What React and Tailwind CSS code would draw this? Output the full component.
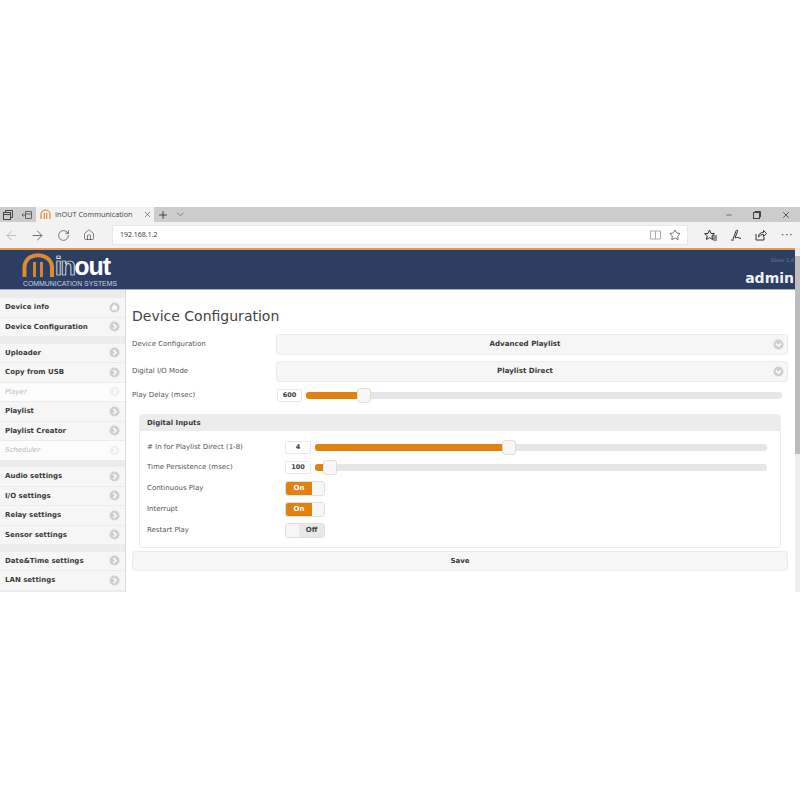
import { ArrowLeft, ArrowRight, RotateCw, Home, Star, X, Plus, ChevronDown, Minus } from "lucide-react";

const menuGroups = [
  [
    { label: "Device info", icon: "home" },
    { label: "Device Configuration" },
  ],
  [
    { label: "Uploader" },
    { label: "Copy from USB" },
    { label: "Player", disabled: true },
    { label: "Playlist" },
    { label: "Playlist Creator" },
    { label: "Scheduler", disabled: true },
  ],
  [
    { label: "Audio settings" },
    { label: "I/O settings" },
    { label: "Relay settings" },
    { label: "Sensor settings" },
  ],
  [
    { label: "Date&Time settings" },
    { label: "LAN settings" },
  ],
];

function RoundIcon({ type = "right", light = false }) {
  return (
    <svg width="11" height="11" viewBox="0 0 12 12" className="shrink-0">
      <circle cx="6" cy="6" r="5.5" fill={light ? "#f0f0f0" : "#cfcfcf"} />
      {type === "right" && <path d="M4.8 3.2 7.6 6 4.8 8.8" fill="none" stroke="#fff" strokeWidth="1.6" />}
      {type === "down" && <path d="M3.2 4.8 6 7.6 8.8 4.8" fill="none" stroke="#fff" strokeWidth="1.6" />}
      {type === "home" && <path d="M6 2.6 2.6 6h1v3h1.9V7h1v2h1.9V6h1z" fill="#fff" />}
    </svg>
  );
}

function MenuItem({ item }) {
  return (
    <div
      className={`flex h-[19.5px] items-center justify-between border-b border-[#ebebeb] pl-[5px] pr-[5px] text-[7px] font-bold ${
        item.disabled ? "bg-[#fcfcfc] italic font-normal text-[#bbb]" : "bg-[#f6f6f6] text-[#3a3a3a]"
      }`}
    >
      <span>{item.label}</span>
      <RoundIcon type={item.icon || "right"} light={item.disabled} />
    </div>
  );
}

function SelectBox({ label, value }) {
  return (
    <div className="flex items-center">
      <div className="w-[144px] pb-[1px] text-[7px] text-[#555]">{label}</div>
      <div className="flex h-[21px] flex-1 items-center rounded-[3px] border border-[#ececec] bg-[#f6f6f6] pr-[3px] text-[7.100px] font-bold text-[#3a3a3a]">
        <span className="flex-1 text-center">{value}</span>
        <RoundIcon type="down" />
      </div>
    </div>
  );
}

function Slider({ value, percent, label, labelWidth, small }) {
  return (
    <div className="flex items-center">
      <div className="text-[7px] text-[#555]" style={{ width: labelWidth }}>{label}</div>
      <div className={`flex h-[13px] items-center justify-center rounded-[2px] border border-[#e8e8e8] bg-white text-[6.500px] font-bold text-[#3a3a3a] ${small ? "w-[26px]" : "w-[25px]"}`}>
        {value}
      </div>
      <div className="relative ml-[4px] h-[7px] flex-1 rounded-[3px] bg-[#e6e6e6]">
        <div className="h-full rounded-[3px] bg-[#e08110]" style={{ width: `${percent}%` }} />
        <div
          className="absolute top-[-4px] h-[15px] w-[14px] -translate-x-1/2 rounded-[3px] border border-[#f0dcc4] bg-[#f7f7f7]"
          style={{ left: `${percent}%` }}
        />
      </div>
    </div>
  );
}

function Toggle({ on }) {
  return (
    <div className="flex h-[15px] w-[40px] overflow-hidden rounded-[3px] border border-[#e0e0e0] text-[7px] font-bold">
      {on ? (
        <>
          <div className="flex w-[26px] items-center justify-center bg-[#e08110] text-[#fff]">On</div>
          <div className="flex-1 bg-[#f6f6f6]" />
        </>
      ) : (
        <>
          <div className="w-[13px] bg-[#f6f6f6]" />
          <div className="flex flex-1 items-center justify-center bg-[#e8e8e8] text-[#444]">Off</div>
        </>
      )}
    </div>
  );
}

function ToggleRow({ label, on }) {
  return (
    <div className="flex items-center">
      <div className="w-[138px] text-[7px] text-[#555]">{label}</div>
      <Toggle on={on} />
    </div>
  );
}

function Logo() {
  return (
    <div className="ml-[22px] flex w-[96px] flex-col">
      <div className="flex h-[27px] items-end">
        <svg width="33" height="24" viewBox="0 0 33 24" className="shrink-0">
          <path d="M2.500 24V15C2.500 7 8.500 2.200 16 2.200S30 7 30 15v9" fill="none" stroke="#e08a2c" strokeWidth="4" />
          <path d="M12.500 9v15M19.500 9v15" fill="none" stroke="#e08a2c" strokeWidth="2.800" />
        </svg>
        <span className="text-[25px] leading-[21px] font-bold tracking-[-1.5px] text-transparent [-webkit-text-stroke:0.7px_#fff] font-['Liberation_Sans',sans-serif]">in</span>
        <span className="text-[25px] leading-[21px] font-bold tracking-[-1px] text-white font-['Liberation_Sans',sans-serif]">out</span>
      </div>
      <div className="mt-[2px] ml-[1px] text-[6.900px] leading-[9px] whitespace-nowrap text-[#c9d3e2] font-['Liberation_Sans',sans-serif]">COMMUNICATION SYSTEMS</div>
    </div>
  );
}

function BrowserChrome() {
  return (
    <>
      <div className="flex h-[15px] items-center bg-[#cccccc] text-[#444]">
        <div className="flex w-[36px] items-center gap-[9px] pl-[3px]">
          <svg width="10" height="10" viewBox="0 0 10 10" fill="none" stroke="#444"><rect x="0.5" y="2.5" width="7" height="7" /><path d="M2.500 2.500v-2h7v7h-2M.5 4.500h7" /></svg>
          <svg width="10" height="10" viewBox="0 0 10 10" fill="none" stroke="#666"><path d="M3.500 1.500h6v7h-6zM3.500 4h6M0 5h3M1.500 3.500 0 5l1.500 1.500" /></svg>
        </div>
        <div className="flex h-full w-[118px] items-center bg-[#f2f2f2] pl-[4px] text-[7.300px] font-['Open_Sans',sans-serif]">
          <svg width="11" height="11" viewBox="0 0 11 11" fill="none" stroke="#e08a2c" strokeWidth="1.200" className="mr-[4px]">
            <path d="M1 10V5.500a4.500 4.500 0 0 1 9 0V10M4.300 4v6M6.700 4v6" />
          </svg>
          <span className="flex-1 whitespace-nowrap">InOUT Communication</span>
          <X size={9} className="mr-[2px] text-[#666]" />
        </div>
        <Plus size={12} className="ml-[3px] text-[#444]" />
        <ChevronDown size={11} className="ml-[6px] text-[#777]" />
        <div className="flex-1" />
        <Minus size={8} className="mr-[20px] text-[#444]" />
        <svg width="8" height="8" viewBox="0 0 8 8" fill="none" stroke="#444" className="mr-[20px]"><rect x="0.5" y="1.500" width="6" height="6" /><path d="M2 1.500V.5h5.500V6h-1" /></svg>
        <X size={10} className="mr-[9px] text-[#444]" />
      </div>
      <div className="flex h-[26px] items-center bg-[#f2f2f2] text-[#333]">
        <ArrowLeft size={15} strokeWidth={1.200} className="ml-[4px] text-[#aaa]" />
        <ArrowRight size={15} strokeWidth={1.200} className="ml-[11px] text-[#444]" />
        <RotateCw size={13} strokeWidth={1.200} className="ml-[12px]" />
        <Home size={12} strokeWidth={1.200} className="ml-[13px]" />
        <div className="ml-[17px] flex h-[20px] w-[576px] items-center border border-[#e8e8e8] bg-white pl-[7px] pr-[6px] text-[7px] font-['Open_Sans',sans-serif]">
          <span className="flex-1">192.168.1.2</span>
          <svg width="11" height="10" viewBox="0 0 11 10" fill="none" stroke="#aaa" className="mr-[8px]"><path d="M.5 1h10v8H.5zM5.500 1v8" /></svg>
          <Star size={12} strokeWidth={1.400} className="text-[#333]" />
        </div>
        <div className="flex flex-1 items-center pl-[16px]">
          <svg width="13" height="12" viewBox="0 0 13 12" fill="none" stroke="#333"><path d="M5.500 1 7 4.400l3.500.3-2.700 2.200.9 3.600L5.500 8.600 2.400 10.500l.9-3.600L.6 4.700l3.500-.3zM8 7h5M9 9h4M9 11h4" /></svg>
          <svg width="12" height="12" viewBox="0 0 12 12" fill="none" stroke="#333" className="ml-[13px]"><path d="M3 10 6 2c1-2 2-1 1.500.5L5 9c2-1 3-.5 6 .5M1 11h3" /></svg>
          <svg width="12" height="12" viewBox="0 0 12 12" fill="none" stroke="#333" className="ml-[13px]"><path d="M1 5v6h8V8M3.500 8c0-3 2-4.500 5-4.500V1.500L11.500 4.500l-3 3V5.500C6 5.500 5 6.500 3.500 8z" /></svg>
          <div className="ml-[14px] text-[10px] leading-none tracking-[1px] text-[#333]">···</div>
        </div>
      </div>
    </>
  );
}

export default function App() {
  return (
    <div className="flex h-[800px] flex-col bg-white font-['DejaVu_Sans',sans-serif]">
      <div className="h-[207px]" />
      <BrowserChrome />

      <div className="flex h-[344px] overflow-hidden">
        <div className="flex min-w-0 flex-1 flex-col">
          <div className="h-[2px] bg-[#e8964a]" />
          {/* Header */}
          <div className="flex h-[40px] items-end justify-between border-b border-[#9fb0c8] bg-[#2c3e61] pb-[1px]">
            <Logo />
            <div className="flex flex-col items-end pr-[1px]">
              <div className="mb-[6px] text-[5px] text-[#6f7f9b]">Silver 1.4</div>
              <div className="mb-[1px] text-[14px] leading-[17px] font-bold text-[#eef1f5]">admin</div>
            </div>
          </div>

          <div className="flex flex-1 overflow-hidden">
            {/* Sidebar */}
            <div className="flex w-[126px] shrink-0 flex-col gap-[6.500px] border-r border-[#dadada] bg-[#ececec] pt-[8px]">
              {menuGroups.map((group, i) => (
                <div key={i} className="flex flex-col">
                  {group.map((item) => (
                    <MenuItem key={item.label} item={item} />
                  ))}
                </div>
              ))}
            </div>

            {/* Main content */}
            <div className="flex min-w-0 flex-1 flex-col pl-[6px] pr-[7px]">
              <h1 className="mt-[16px] h-[20px] text-[14px] leading-[20px] text-[#444]">Device Configuration</h1>
              <div className="mt-[8px] flex flex-col gap-[6px]">
                <SelectBox label="Device Configuration" value="Advanced Playlist" />
                <SelectBox label="Digital I/O Mode" value="Playlist Direct" />
              </div>
              <div className="mt-[7px] pr-[6px]">
                <Slider label="Play Delay (msec)" labelWidth={145} value="600" percent={12.2} />
              </div>

              <div className="mx-[7px] mt-[12px] flex h-[134px] flex-col rounded-[3px] border border-[#ececec]">
                <div className="flex h-[16px] items-center rounded-t-[3px] bg-[#ececec] pl-[7px] text-[7px] font-bold text-[#3a3a3a]">Digital Inputs</div>
                <div className="flex flex-col pl-[7px] pr-[13px] pt-[10px]">
                  <Slider label="# In for Playlist Direct (1-8)" labelWidth={138} value="4" percent={42.9} small />
                  <div className="mt-[7px]">
                    <Slider label="Time Persistence (msec)" labelWidth={138} value="100" percent={3.3} small />
                  </div>
                  <div className="mt-[7px] flex flex-col gap-[6px]">
                    <ToggleRow label="Continuous Play" on />
                    <ToggleRow label="Interrupt" on />
                    <ToggleRow label="Restart Play" />
                  </div>
                </div>
              </div>

              <div className="mt-[3px] flex h-[20px] shrink-0 items-center justify-center rounded-[3px] border border-[#ececec] bg-[#f6f6f6] text-[7px] font-bold text-[#3a3a3a]">Save</div>
            </div>
          </div>
        </div>

        {/* Scrollbar */}
        <div className="flex w-[5px] shrink-0 flex-col bg-[#eeeeee]">
          <div className="h-[8px]" />
          <div className="h-[198px] bg-[#bdbdbd]" />
        </div>
      </div>
    </div>
  );
}
